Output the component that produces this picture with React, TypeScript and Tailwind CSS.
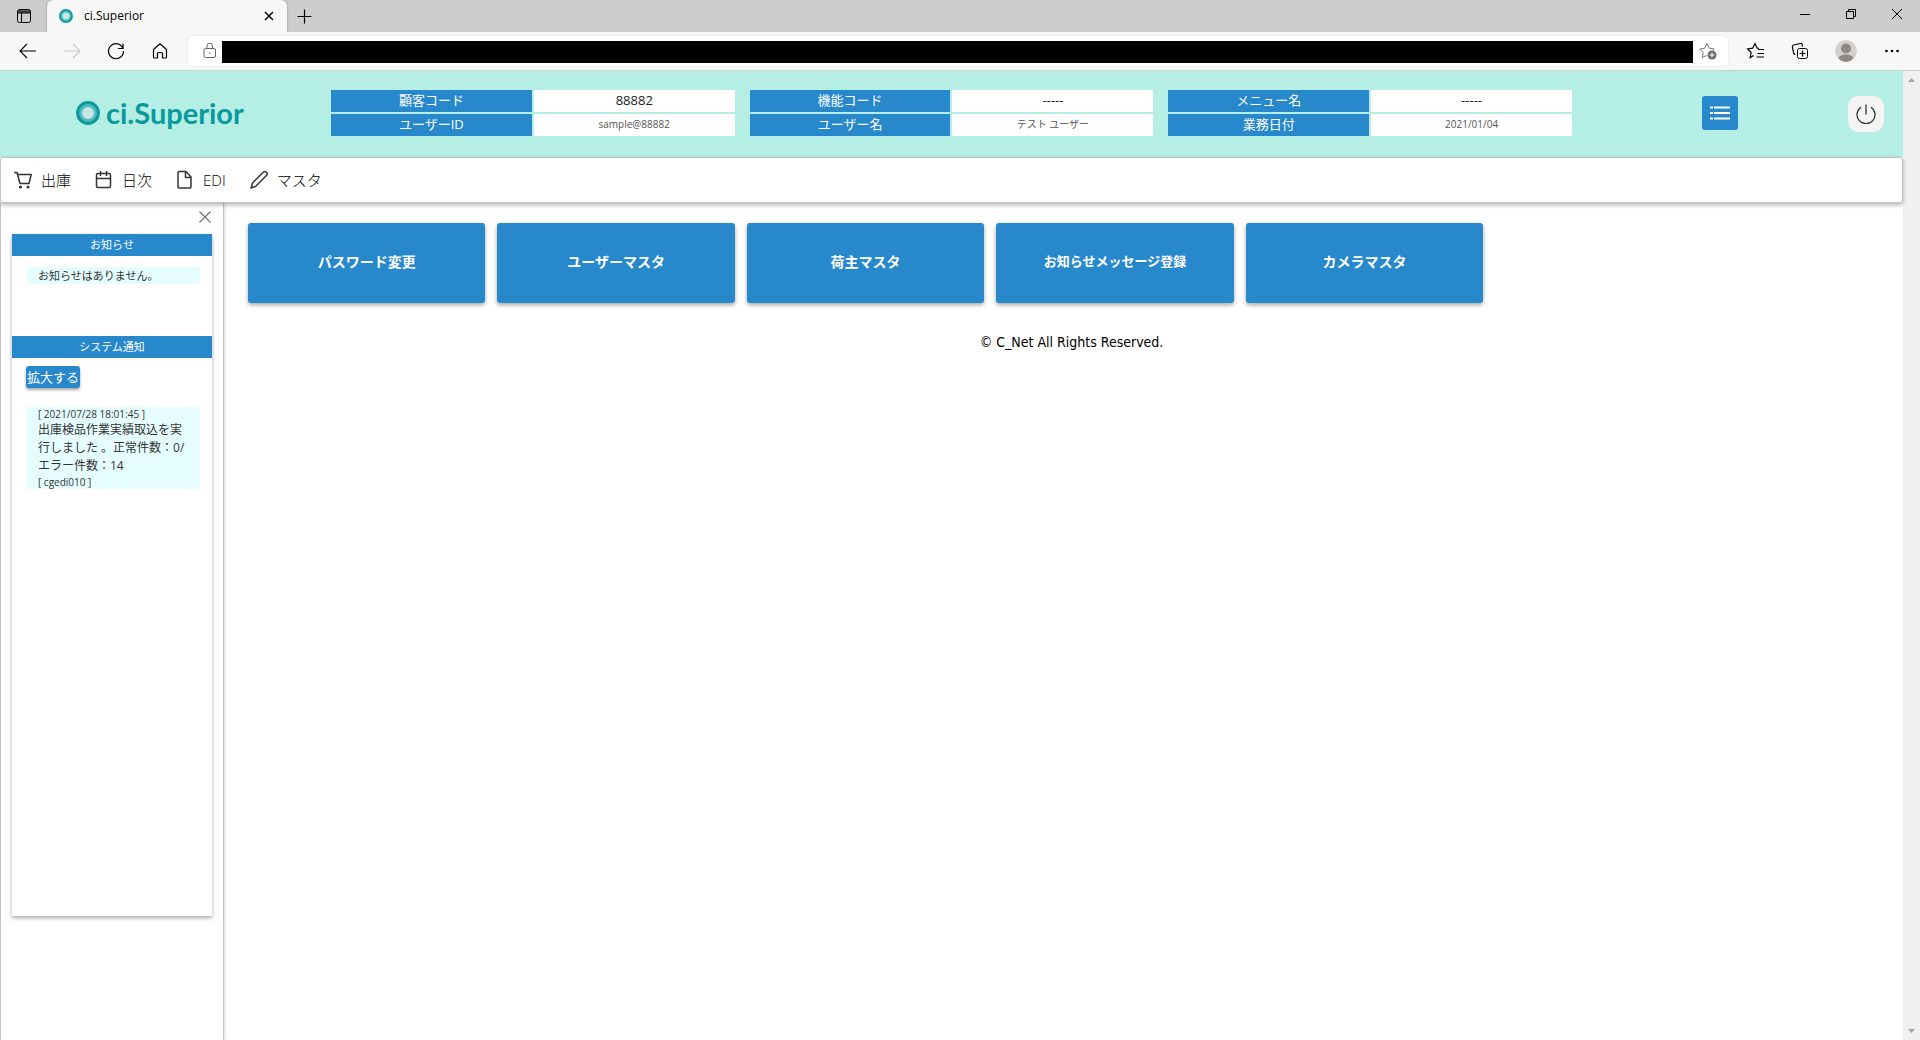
import React from "react";

const line = { fill: "none", stroke: "currentColor", strokeWidth: 1 } as const;

function Logo({ className }: { className: string }) {
  return (
    <svg viewBox="0 0 24 24" className={className} aria-hidden="true">
      <circle cx="12" cy="12" r="10.4" fill="#4fbcbb" stroke="#0a9a9c" strokeWidth="3" />
      <circle cx="12" cy="12" r="6" fill="#c9e6e9" />
    </svg>
  );
}

function Icon({ children, className = "size-5" }: { children: React.ReactNode; className?: string }) {
  return (
    <svg viewBox="0 0 20 20" className={className} aria-hidden="true" {...line}>
      {children}
    </svg>
  );
}

function TabStrip() {
  return (
    <div className="flex h-8 items-stretch bg-[#cdcdcd]">
      <button aria-label="Tab actions" className="flex w-[47px] items-center justify-center text-black">
        <Icon>
          <rect x="3.5" y="3.5" width="13" height="13" rx="2" />
          <path d="M4 5h12M4 6h12M4 7h12M7.5 7v9" />
        </Icon>
      </button>
      <div className="flex w-60 items-center rounded-t-md bg-[#f7f7f7] px-3 shadow-[0_0_2px_rgba(0,0,0,0.4)]">
        <Logo className="size-[14px]" />
        <span className="ml-[11px] flex-1 text-xs text-black">ci.Superior</span>
        <button aria-label="Close tab" className="flex size-3 items-center justify-center text-black">
          <svg viewBox="0 0 10 10" className="size-[10px]" fill="none" stroke="currentColor" strokeWidth="1.5">
            <path d="M1 1l8 8M9 1l-8 8" />
          </svg>
        </button>
      </div>
      <button aria-label="New tab" className="flex w-[35px] items-center justify-center text-black">
        <svg viewBox="0 0 15 15" className="size-[15px]" {...line}>
          <path d="M7.5 0.5v14M0.5 7.5h14" strokeWidth="1.2" />
        </svg>
      </button>
      <div className="ml-auto flex text-black">
        <button aria-label="Minimize" className="flex h-7 w-[46px] items-center justify-center">
          <svg viewBox="0 0 10 10" className="size-[10px]" {...line}><path d="M0 5.5h10" /></svg>
        </button>
        <button aria-label="Restore" className="flex h-7 w-[46px] items-center justify-center">
          <svg viewBox="0 0 10 10" className="size-[10px]" {...line}>
            <path d="M0.5 2.5h7v7h-7zM2.5 2.5v-2h7v7h-2" />
          </svg>
        </button>
        <button aria-label="Close" className="flex h-7 w-[46px] items-center justify-center">
          <svg viewBox="0 0 10 10" className="size-[10px]" {...line}><path d="M0 0l10 10M10 0L0 10" /></svg>
        </button>
      </div>
    </div>
  );
}

function ToolButton({ label, children, className = "text-black" }: { label: string; children: React.ReactNode; className?: string }) {
  return (
    <button aria-label={label} className={"flex w-11 items-center justify-center " + className}>
      {children}
    </button>
  );
}

function Toolbar() {
  return (
    <div className="flex h-[39px] items-center border-b border-[#cfcfcf] bg-[#f7f7f7] pr-[5px] pl-[6px]">
      <ToolButton label="Back">
        <Icon><path d="M18 10H2.500M9 3l-7 7l7 7" strokeWidth="1.1" /></Icon>
      </ToolButton>
      <ToolButton label="Forward" className="text-[#c8c8c8]">
        <Icon><path d="M2 10h15.500M11 3l7 7l-7 7" strokeWidth="1.1" /></Icon>
      </ToolButton>
      <ToolButton label="Refresh">
        <Icon><path d="M17 7.500A7.500 7.500 0 1 0 17.500 10M17 2.500v5h-5" strokeWidth="1.2" /></Icon>
      </ToolButton>
      <ToolButton label="Home">
        <Icon>
          <path d="M3.500 8.500L10 2.800l6.500 5.700v7.500q0 1-1 1h-3v-4.500q0-1-1-1h-3q-1 0-1 1V17h-3q-1 0-1-1z" strokeWidth="1.2" strokeLinejoin="round" />
        </Icon>
      </ToolButton>
      <div className="ml-[6px] flex h-[30px] flex-1 items-center rounded bg-white shadow-[0_0_2px_rgba(0,0,0,0.12)]">
        <button aria-label="Site information" className="flex w-[34px] justify-end pr-[2px] text-[#666]">
          <Icon>
            <rect x="4" y="7.500" width="11.500" height="9" rx="1.500" />
            <path d="M7 7.500V5a2.700 2.700 0 0 1 5.500 0v2.500" />
            <circle cx="9.800" cy="12" r="0.800" fill="currentColor" stroke="none" />
          </Icon>
        </button>
        <input aria-label="Address" className="mt-[6px] mb-1 h-[22px] flex-1 bg-black" />
        <button aria-label="Add to favorites" className="flex w-[35px] items-center pl-[5px] text-[#777]">
          <Icon>
            <path d="M8.500 14.300l-4.200 2.400l.9-5.200L1.700 8l5-.8L9 2.500l2.300 4.700l5 .8l-1.300 1.400" />
            <circle cx="14" cy="14" r="4.500" fill="#6e6e6e" stroke="none" />
            <path d="M14 11.500v5M11.500 14h5" stroke="#fff" />
          </Icon>
        </button>
      </div>
      <div className="flex pl-[3px]">
        <button aria-label="Favorites" className="flex w-[46px] items-center justify-center pl-1 text-black">
          <Icon>
            <path d="M7.500 14.500l-3.300 2.300l.9-5.300L1.700 8l5-.8L9 2.500l2.300 4.700l1.500.3M12 8.500h6M11.500 12.500h6.500M10.500 16h7.500" strokeWidth="1.2" />
          </Icon>
        </button>
        <button aria-label="Collections" className="flex w-[46px] items-center justify-center text-black">
          <Icon>
            <rect x="7.500" y="7.500" width="10" height="10" rx="2" />
            <path d="M12.500 9.500v6M9.500 12.500h6M5.500 13.500q-1.500 0-1.900-1.500L2.400 6q-.3-1.500 1.200-2l6.600-1.500q1.600-.2 2 1.200l.3 1.800" strokeWidth="1.2" />
          </Icon>
        </button>
        <button aria-label="Profile" className="flex w-[46px] items-center justify-center">
          <svg viewBox="0 0 22 22" className="size-[22px] rounded-full">
            <circle cx="11" cy="11" r="11" fill="#d3d0cd" />
            <circle cx="11" cy="8.500" r="5" fill="#8d8884" />
            <path d="M3.500 18q1.500-3.500 7.500-3.500T18.500 18q-3 4-7.500 4t-7.500-4z" fill="#8d8884" />
          </svg>
        </button>
        <button aria-label="Settings and more" className="flex w-[46px] items-center justify-center text-black">
          <svg viewBox="0 0 14 4" className="h-1 w-[14px]" fill="currentColor">
            <circle cx="1.500" cy="2" r="1.300" /><circle cx="7" cy="2" r="1.300" /><circle cx="12.500" cy="2" r="1.300" />
          </svg>
        </button>
      </div>
    </div>
  );
}

const info = [
  [["顧客コード", "88882"], ["ユーザーID", "sample@88882"]],
  [["機能コード", "-----"], ["ユーザー名", "テスト ユーザー"]],
  [["メニュー名", "-----"], ["業務日付", "2021/01/04"]],
];

function Header() {
  return (
    <header className="flex h-[86px] items-start bg-[#b5eee5]">
      <a href="#" className="flex w-[331px] items-center gap-[6px] self-stretch pb-[3px] pl-[76px] text-[#0a9a9c]">
        <Logo className="size-6" />
        <span className="font-[Lato] text-[29px] leading-8 font-bold">ci.Superior</span>
      </a>
      <div className="grid flex-1 grid-cols-3 gap-x-[15px] pt-[19px]">
        {info.map((group) => (
          <dl key={group[0][0]} className="grid grid-cols-2 gap-[2px] text-center">
            {group.map(([label, value], row) => (
              <React.Fragment key={label}>
                <dt className="h-[22px] bg-[#2788cc] text-[13px] leading-5 text-white">{label}</dt>
                <dd className={row === 0 ? "h-[22px] bg-white text-[13px] leading-5 text-[#222]" : "h-[22px] bg-white text-[10px] leading-5 text-[#555]"}>
                  {value}
                </dd>
              </React.Fragment>
            ))}
          </dl>
        ))}
      </div>
      <div className="flex w-[331px] justify-end gap-[110px] pt-[25px] pr-[19px]">
        <button aria-label="Menu list" className="flex h-[34px] w-9 items-center justify-center rounded-[3px] bg-[#2788cc]">
          <svg viewBox="0 0 20 14" className="h-[14px] w-5" stroke="#fff" strokeWidth="2.200" fill="none">
            <path d="M0 1.500h3M4 1.500h16M0 7h3M4 7h16M0 12.500h3M4 12.500h16" />
          </svg>
        </button>
        <button aria-label="Log out" className="flex size-9 items-center justify-center rounded-[11px] bg-[#f4f4f4] text-[#333]">
          <svg viewBox="0 0 20 20" className="size-5" fill="none" stroke="currentColor" strokeWidth="1.300">
            <path d="M10 0.500v10M5 3.200a9 9 0 1 0 10 0" />
          </svg>
        </button>
      </div>
    </header>
  );
}

const menu = [
  {
    label: "出庫",
    icon: <><path d="M1 2.500h3l3 11h9l2.200-9H4.500" /><circle cx="7.500" cy="17" r=".8" fill="currentColor" /><circle cx="15" cy="17" r=".8" fill="currentColor" /></>,
  },
  {
    label: "日次",
    icon: <><rect x="2.500" y="3.500" width="14" height="14" rx="1.500" /><path d="M2.500 8.500h14M6.500 1v5M12.500 1v5" /></>,
  },
  {
    label: "EDI",
    icon: <path d="M4 1.500h7l5 5.500v10q0 1-1 1H4q-1 0-1-1v-14.500q0-1 1-1zM10.500 1.500V7.500H16" />,
  },
  {
    label: "マスタ",
    icon: <path d="M2 18l1.500-5L14.500 2q1.500-1.200 3 .2t.2 3L6.500 16.500z" />,
  },
];

function Nav() {
  return (
    <nav className="relative flex h-[46px] items-center gap-[23px] rounded-[3px] border border-[#c4c4c4] bg-white pl-3 shadow-[0_2px_4px_rgba(0,0,0,0.3)]">
      {menu.map((item) => (
        <a key={item.label} href="#" className="flex items-center gap-2 text-[15px] leading-5 font-light text-black">
          <svg viewBox="0 0 20 20" className="size-5" fill="none" stroke="#333" strokeWidth="1.500" strokeLinejoin="round" aria-hidden="true">
            {item.icon}
          </svg>
          {item.label}
        </a>
      ))}
    </nav>
  );
}

function Sidebar() {
  return (
    <aside className="w-56 shrink-0 border-x border-[#c4c4c4] px-[11px] shadow-[1px_0_3px_rgba(0,0,0,0.15)]">
      <div className="flex h-[31px] items-center justify-end pr-[1px] pb-1">
        <button aria-label="Close panel" className="text-[#777]">
          <svg viewBox="0 0 12 12" className="size-3" fill="none" stroke="currentColor" strokeWidth="1.300">
            <path d="M0.500 0.500l11 11M11.500 0.500l-11 11" />
          </svg>
        </button>
      </div>
      <div className="h-[682px] shadow-[0_2px_4px_rgba(0,0,0,0.35)]">
        <h2 className="h-[22px] bg-[#2788cc] text-center text-[11px] leading-[22px] text-white">お知らせ</h2>
        <div className="h-20 pt-[11px] pr-3 pl-[15px]">
          <p className="bg-[#e6fdff] pl-[11px] text-[11px] leading-[17px] text-[#333]">お知らせはありません。</p>
        </div>
        <h2 className="h-[22px] bg-[#2788cc] text-center text-[11px] leading-[22px] text-white">システム通知</h2>
        <div className="pt-2 pr-3 pl-[14px]">
          <button className="block h-[22px] rounded-[3px] bg-[#2788cc] px-px text-[13px] leading-5 text-white shadow-[0_2px_3px_rgba(0,0,0,0.35)]">
            拡大する
          </button>
          <div className="mt-[19px] ml-px bg-[#e6fdff] pr-3 pl-[11px] text-[#333]">
            <p className="text-[10px] leading-[14px]">[ 2021/07/28 18:01:45 ]</p>
            <p className="text-xs leading-[18px]">出庫検品作業実績取込を実<br />行しました 。正常件数：0/<br />エラー件数：14</p>
            <p className="text-[10px] leading-[14px]">[ cgedi010 ]</p>
          </div>
        </div>
      </div>
    </aside>
  );
}

const cards = ["パスワード変更", "ユーザーマスタ", "荷主マスタ", "お知らせメッセージ登録", "カメラマスタ"];

function Main() {
  return (
    <main className="ml-4 flex-1">
      <div className="mt-5 ml-2 grid w-[calc(75%-12px)] grid-cols-5 gap-3">
        {cards.map((label) => (
          <button
            key={label}
            className={
              "h-20 rounded-[3px] bg-[#2788cc] pb-[2px] font-bold text-white shadow-[0_2px_4px_rgba(0,0,0,0.35)] " +
              (label.length > 8 ? "text-[13px]" : "text-sm")
            }
          >
            {label}
          </button>
        ))}
      </div>
      <footer className="mt-[29px] text-center font-['DejaVu_Sans_Condensed','DejaVu_Sans',sans-serif] text-sm leading-5 text-black">© C_Net All Rights Reserved.</footer>
    </main>
  );
}

function ScrollBar() {
  return (
    <div className="flex w-[17px] shrink-0 flex-col items-center justify-between bg-[#f0f0f0] py-[7px]" aria-hidden="true">
      <svg viewBox="0 0 7 4" className="h-1 w-[7px]" fill="#a3a3a3"><path d="M0 4L3.500 0L7 4z" /></svg>
      <svg viewBox="0 0 7 4" className="h-1 w-[7px]" fill="#a3a3a3"><path d="M0 0L3.500 4L7 0z" /></svg>
    </div>
  );
}

export default function App() {
  return (
    <div className="flex h-screen flex-col overflow-hidden bg-white font-['Open_Sans','Noto_Sans_CJK_JP',sans-serif]">
      <TabStrip />
      <Toolbar />
      <div className="flex min-h-0 flex-1">
        <div className="flex min-w-0 flex-1 flex-col">
          <Header />
          <Nav />
          <div className="flex min-h-0 flex-1">
            <Sidebar />
            <Main />
          </div>
        </div>
        <ScrollBar />
      </div>
    </div>
  );
}
